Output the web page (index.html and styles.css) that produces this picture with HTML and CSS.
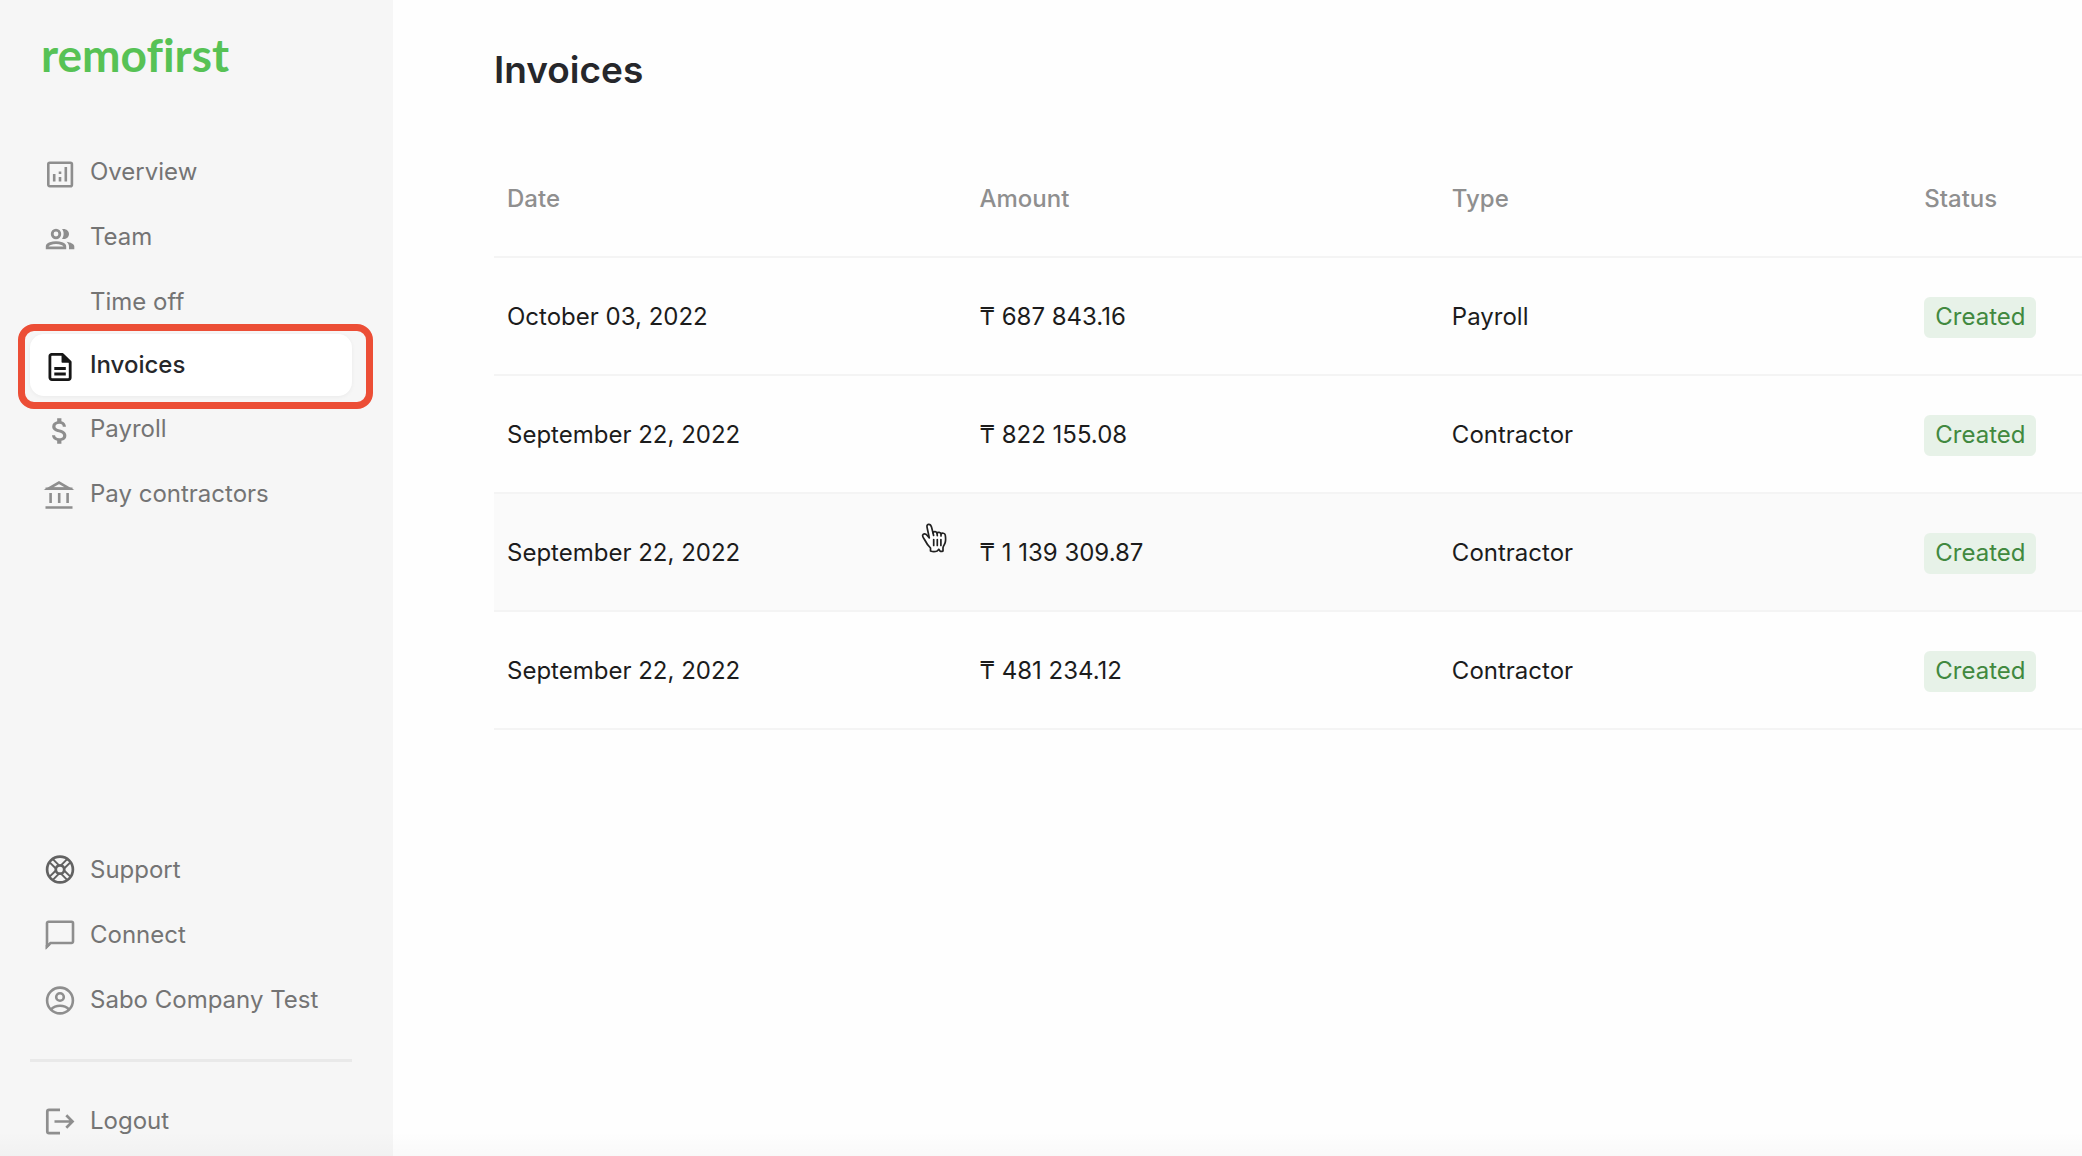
FILE: index.html
```html
<!DOCTYPE html>
<html lang="en">
<head>
    <meta charset="UTF-8">
    <meta name="viewport" content="width=device-width, initial-scale=1.0">
    <title>Invoices - remofirst</title>
    <link rel="stylesheet" href="styles.css">
</head>
<body>
    <div class="layout">
        <aside class="sidebar">
            <a class="logo" href="#">remofirst</a>

            <nav class="nav">
                <a class="nav-item" href="#">
                    <svg class="icon" viewBox="0 0 34 34" fill="none" stroke="currentColor" stroke-width="2.6">
                        <rect x="5.3" y="7.8" width="23.6" height="23.4" rx="1.5"/>
                        <path d="M11.2 19V26.500M17 16.500v2.600M17 22v4.500M22.800 12V26.500"/>
                    </svg>
                    <span>Overview</span>
                </a>
                <a class="nav-item" href="#">
                    <svg class="icon" viewBox="0 0 34 34" fill="none" stroke="currentColor" stroke-width="2.8">
                        <circle cx="13" cy="14" r="3.8"/>
                        <path d="M4.200 27.800v-1.400c0-2.400 5-3.800 8.800-3.800s8.800 1.400 8.800 3.800v1.400z"/>
                        <path d="M19 9.100c3.600-1 7 1.500 7 4.900s-3.400 5.900-7 4.900c2.200-2.700 2.200-7.100 0-9.800zM23.500 21.800c4 .6 7.800 2.200 7.800 4.800v2.600h-5.300v-2.600c0-1.900-.9-3.500-2.500-4.800z" fill="currentColor" stroke="none"/>
                    </svg>
                    <span>Team</span>
                </a>
                <a class="nav-item nav-sub" href="#">
                    <span>Time off</span>
                </a>
                <a class="nav-item active" href="#" aria-current="page">
                    <svg class="icon" viewBox="0 0 34 34" fill="none" stroke="currentColor" stroke-width="2.8" stroke-linejoin="round">
                        <path d="M8.500 6.400H19.500L27.200 14v15.600a2 2 0 0 1-2 2H8.900a2 2 0 0 1-2-2V8.400a2 2 0 0 1 1.600-2z"/>
                        <path d="M19.300 6.400V14h7.900z" fill="currentColor" stroke-width="1.5"/>
                        <path d="M11.300 20.500h11.500M11.300 26h11.500"/>
                    </svg>
                    <span>Invoices</span>
                </a>
                <a class="nav-item" href="#">
                    <svg class="icon" viewBox="0 0 24 24" fill="currentColor">
                        <path d="M11.8 12.300c-2.270-.59-3-1.200-3-2.150 0-1.090 1.010-1.850 2.700-1.850 1.780 0 2.440.85 2.500 2.100h2.210c-.07-1.720-1.120-3.300-3.210-3.810V4.400h-3v2.160c-1.940.42-3.500 1.680-3.500 3.610 0 2.310 1.910 3.460 4.700 4.130 2.500.6 3 1.480 3 2.410 0 .69-.49 1.790-2.700 1.790-2.060 0-2.870-.92-2.980-2.100h-2.200c.12 2.190 1.760 3.420 3.680 3.830v2.170h3v-2.150c1.950-.37 3.500-1.500 3.500-3.550 0-2.840-2.430-3.810-4.700-4.400z"/>
                    </svg>
                    <span>Payroll</span>
                </a>
                <a class="nav-item" href="#">
                    <svg class="icon" viewBox="0 0 34 34" fill="none" stroke="currentColor" stroke-width="2.6">
                        <path d="M5.500 11.600L16 5.600l10.500 6z"/>
                        <path d="M2.500 11.800h27M7.600 16v10M16.200 16v10M24.600 16v10M2.500 30.500h27"/>
                    </svg>
                    <span>Pay contractors</span>
                </a>
            </nav>

            <nav class="nav nav-bottom">
                <a class="nav-item" href="#">
                    <svg class="icon icon-dark" viewBox="0 0 34 34" fill="none" stroke="currentColor" stroke-width="2.7">
                        <circle cx="17" cy="16.5" r="12.9"/>
                        <circle cx="17" cy="16.5" r="4.2"/>
                        <path d="M21.400 15.300l5.700-5.700M18.200 12.100l5.700-5.700M12.600 15.300L6.900 9.600M15.800 12.100l-5.700-5.700M21.400 17.700l5.700 5.700M18.200 20.900l5.700 5.700M12.600 17.700l-5.700 5.700M15.800 20.900l-5.700 5.700" stroke-width="2"/>
                    </svg>
                    <span>Support</span>
                </a>
                <a class="nav-item" href="#">
                    <svg class="icon" viewBox="0 0 34 34" fill="none" stroke="currentColor" stroke-width="2.6">
                        <path d="M4 28.500V5.300a1.500 1.500 0 0 1 1.500-1.500h23a1.500 1.500 0 0 1 1.500 1.500v18.200a1.500 1.500 0 0 1-1.500 1.500H7.500z"/>
                        <path d="M2.700 31.500V27h4.500z" fill="currentColor" stroke="none"/>
                    </svg>
                    <span>Connect</span>
                </a>
                <a class="nav-item" href="#">
                    <svg class="icon" viewBox="0 0 34 34" fill="none" stroke="currentColor" stroke-width="2.6">
                        <circle cx="17" cy="17.5" r="12.9"/>
                        <circle cx="17" cy="14" r="3.8"/>
                        <path d="M8 26.500c2.500-2.600 5.600-3.700 9-3.700s6.500 1.100 9 3.700"/>
                    </svg>
                    <span>Sabo Company Test</span>
                </a>
                <hr class="divider">
                <a class="nav-item" href="#">
                    <svg class="icon" viewBox="0 0 34 34" fill="none" stroke="currentColor" stroke-width="2.7">
                        <path d="M17 5.800H6a1.700 1.700 0 0 0-1.700 1.700v20a1.700 1.700 0 0 0 1.700 1.700h11"/>
                        <path d="M11.500 17.500h17.500M23.300 11.300l6.200 6.200-6.200 6.200"/>
                    </svg>
                    <span>Logout</span>
                </a>
            </nav>
        </aside>

        <main class="content">
            <h1 class="title">Invoices</h1>

            <table class="invoices">
                <thead>
                    <tr>
                        <th>Date</th>
                        <th>Amount</th>
                        <th>Type</th>
                        <th>Status</th>
                    </tr>
                </thead>
                <tbody>
                    <tr>
                        <td>October 03, 2022</td>
                        <td>₸ 687 843.16</td>
                        <td>Payroll</td>
                        <td><span class="badge">Created</span></td>
                    </tr>
                    <tr>
                        <td>September 22, 2022</td>
                        <td>₸ 822 155.08</td>
                        <td>Contractor</td>
                        <td><span class="badge">Created</span></td>
                    </tr>
                    <tr class="hovered">
                        <td>
                            September 22, 2022
                            <svg class="pointer" viewBox="0 0 28 30" fill="#fff" stroke="#222" stroke-width="1.7" stroke-linejoin="round" stroke-linecap="round">
                                <path d="M9.500 28v-3C7 22.500 5 19.500 3.500 16.500c-1-1.800-2.300-3-1.800-4.400.7-1.700 3-1.400 4.300.2l2.300 2.600L6.300 5.500C5.600 2.800 6 1.500 7.500 1.300c1.600-.2 2.500.9 3 2.700l1.500 5.800c.5-1.700 3.700-1.600 4 .4.700-1.400 3.700-1.200 4 .7.900-1.200 3.800-.9 4.200 1 .5 2.600.6 5.200 0 7.600-.5 2-1.900 3.500-2.200 5.200V28c-1 .5-2.600.3-3 0l-1.200-1.700L16.200 28c-1.600.6-5 .6-6.700 0z"/>
                                <path d="M12.700 16.500v6M16.300 16.500v6M19.900 16.500v6M12 9.800l.6 2.700M16 10.200l.3 2.500M20 11v2" fill="none"/>
                            </svg>
                        </td>
                        <td>₸ 1 139 309.87</td>
                        <td>Contractor</td>
                        <td><span class="badge">Created</span></td>
                    </tr>
                    <tr>
                        <td>September 22, 2022</td>
                        <td>₸ 481 234.12</td>
                        <td>Contractor</td>
                        <td><span class="badge">Created</span></td>
                    </tr>
                </tbody>
            </table>
        </main>
    </div>
</body>
</html>
```
FILE: styles.css
```css
:root {
    --bg-page: #fefefe;
    --bg-sidebar: #f6f6f6;
    --bg-hover: #fafafa;
    --bottom-fade: linear-gradient(to top, rgba(0, 0, 0, 0.02), transparent 24px);
    --color-text: #1c1c1c;
    --color-title: #26272b;
    --color-nav: #747474;
    --color-icon: #8e8e8e;
    --color-muted: #8f8f8f;
    --color-border: #f4f4f4;
    --color-brand: #57c255;
    --color-highlight: #ec4e36;
}

* {
    margin: 0;
    padding: 0;
    box-sizing: border-box;
}

body {
    background-color: var(--bg-page);
    color: var(--color-text);
    font-family: Inter, "Noto Sans", sans-serif;
    font-size: 24px;
    line-height: 32px;
}

.layout {
    display: flex;
    min-height: 100vh;
}

.sidebar {
    display: flex;
    flex-direction: column;
    flex-shrink: 0;
    width: 393px;
    padding: 31px 41px 3px 30px;
    background-color: var(--bg-sidebar);
    background-image: var(--bottom-fade);
}

.logo {
    padding-left: 11px;
    margin-bottom: 60px;
    color: var(--color-brand);
    font-family: Lato, sans-serif;
    font-size: 46px;
    font-weight: 700;
    font-variant-ligatures: none;
    line-height: 48px;
    text-decoration: none;
}

.nav {
    display: flex;
    flex-direction: column;
}

.nav-bottom {
    margin-top: auto;
}

.nav-item {
    display: flex;
    align-items: center;
    gap: 13px;
    height: 65px;
    padding-left: 13px;
    color: var(--color-nav);
    text-decoration: none;
}

.nav-sub {
    padding-left: 60px;
}

.nav-item.active {
    position: relative;
    height: 62px;
    border-radius: 14px;
    background-color: #fff;
    box-shadow: 0 1px 4px rgba(0, 0, 0, 0.05);
    color: var(--color-title);
    font-weight: 500;
}

/* red frame around the current page */
.nav-item.active::after {
    content: "";
    position: absolute;
    inset: -10px -21px -13px -12px;
    border: 7px solid var(--color-highlight);
    border-radius: 16px;
}

.icon {
    flex-shrink: 0;
    width: 34px;
    height: 34px;
    color: var(--color-icon);
}

.icon-dark {
    color: #626262;
}

.active .icon {
    color: #161616;
}

.divider {
    height: 3px;
    margin: 27px 0 26px;
    border: none;
    background-color: #e9e9e9;
}

.content {
    flex: 1;
    min-width: 0;
    padding: 46px 0 46px 101px;
    background-image: var(--bottom-fade);
    overflow: hidden;
}

.title {
    margin-bottom: 46px;
    color: var(--color-title);
    font-size: 37px;
    font-weight: 600;
    line-height: 48px;
}

/* the last column runs on past the edge of the window */
.invoices {
    width: 119%;
    table-layout: fixed;
    border-collapse: separate;
    border-spacing: 0;
}

.invoices th,
.invoices td {
    height: 118px;
    padding: 2px 13px 0;
    border-bottom: 2px solid var(--color-border);
    text-align: left;
    vertical-align: middle;
}

.invoices th {
    color: var(--color-muted);
    font-weight: 500;
}

.hovered td {
    position: relative;
    background-color: var(--bg-hover);
}

.badge {
    display: inline-block;
    padding: 4px 11px 5px;
    border-radius: 6px;
    background-color: #e7f2e8;
    color: #41893f;
}

.pointer {
    position: absolute;
    top: 29px;
    right: 17px;
    width: 28px;
    height: 30px;
}
```
